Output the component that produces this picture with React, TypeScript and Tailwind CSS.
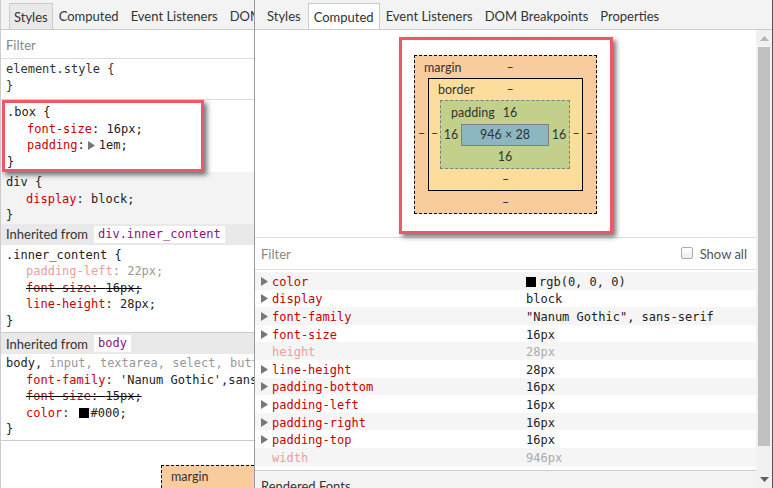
import React from "react";

const UI = "font-['Lato',sans-serif]";
const MONO = "font-['DejaVu_Sans_Mono',monospace]";

function Tri() {
  return (
    <svg width="7" height="9" viewBox="0 0 7 9" className="inline-block shrink-0">
      <path d="M0 0 L7 4.5 L0 9 Z" fill="#777" />
    </svg>
  );
}

function TopRow({ label, value, h, pl }: { label: string; value: string; h: string; pl: string }) {
  return (
    <div className={`${h} flex items-center`}>
      <span className={`flex-1 basis-0 min-w-0 whitespace-nowrap ${pl}`}>{label}</span>
      <span className="shrink-0">{value}</span>
      <span className="flex-1 basis-0 min-w-0" />
    </div>
  );
}

function BoxModel() {
  return (
    <div className={`w-[183px] h-[159px] border border-dashed border-black bg-[#f9cc9d] flex flex-col text-[12.5px] leading-none text-[#333] ${UI}`}>
      <TopRow label="margin" value="–" h="h-[22px] pt-[2px]" pl="pl-[9px]" />
      <div className="flex items-center h-[113px]">
        <div className="w-[13px] shrink-0 text-center">–</div>
        <div className="w-[155px] shrink-0 h-[113px] border border-black bg-[#fddd9b] flex flex-col">
          <TopRow label="border" value="–" h="h-[21px] pt-[2px]" pl="pl-[9px]" />
          <div className="flex items-center h-[69px]">
            <div className="w-[11px] shrink-0 text-center">–</div>
            <div className="w-[130px] shrink-0 h-[69px] border border-dashed border-[#808080] bg-[#c3d08b] flex flex-col">
              <TopRow label="padding" value="16" h="h-[23px] pt-[1px]" pl="pl-[10px]" />
              <div className="flex items-center h-[22px]">
                <div className="w-[20px] shrink-0 text-center">16</div>
                <div className="w-[88px] shrink-0 h-[22px] border border-[#808080] bg-[#8cb6c0] flex items-center justify-center">
                  946 × 28
                </div>
                <div className="w-[20px] shrink-0 text-center">16</div>
              </div>
              <div className="flex-1 flex items-center justify-center">16</div>
            </div>
            <div className="w-[12px] shrink-0 text-center">–</div>
          </div>
          <div className="flex-1 pt-[1px] flex items-center justify-center">–</div>
        </div>
        <div className="w-[13px] shrink-0 text-center">–</div>
      </div>
      <div className="flex-1 pt-[2px] flex items-center justify-center">–</div>
    </div>
  );
}

const N = "text-[#c80000]";

function Prop({ name, children }: { name: string; children: React.ReactNode }) {
  return (
    <div className="pl-[20px] whitespace-nowrap">
      <span className={N}>{name}</span>: {children}
    </div>
  );
}

function Struck({ name, value }: { name: string; value: string }) {
  return (
    <div className="pl-[20px] whitespace-nowrap">
      <span className="line-through decoration-black text-[#222]">
        <span className={N}>{name}</span>: {value}
      </span>
    </div>
  );
}

function Inherited({ label }: { label: string }) {
  return (
    <div className={`h-[21px] bg-[#e9e9e9] flex items-center px-[5px] gap-[6px] text-[13px] text-[#333] ${UI}`}>
      <span className="pt-[1px]">Inherited from</span>
      <span className={`h-[17px] bg-white px-[4px] flex items-center text-[12px] text-[#881280] ${MONO}`}>{label}</span>
    </div>
  );
}

const rows: { n: string; v: string; swatch?: boolean; dim?: boolean }[] = [
  { n: "color", v: "rgb(0, 0, 0)", swatch: true },
  { n: "display", v: "block" },
  { n: "font-family", v: '"Nanum Gothic", sans-serif' },
  { n: "font-size", v: "16px" },
  { n: "height", v: "28px", dim: true },
  { n: "line-height", v: "28px" },
  { n: "padding-bottom", v: "16px" },
  { n: "padding-left", v: "16px" },
  { n: "padding-right", v: "16px" },
  { n: "padding-top", v: "16px" },
  { n: "width", v: "946px", dim: true },
];

export default function App() {
  return (
    <div className="w-[773px] h-[488px] flex overflow-hidden bg-white">
      {/* Left: Styles panel */}
      <div className="w-[254px] shrink-0 h-full overflow-hidden border-l border-[#ccc] flex flex-col">
        <div className={`h-[30px] shrink-0 bg-[#f3f3f3] border-b border-[#ccc] flex items-end pl-[8px] text-[13px] text-[#333] whitespace-nowrap ${UI}`}>
          <div className="h-[26px] px-[4px] pt-[2px] flex items-center bg-[#e9e9e9] border border-b-0 border-[#ccc]">Styles</div>
          <div className="h-[26px] px-[6px] pt-[2px] flex items-center">Computed</div>
          <div className="h-[26px] px-[6px] pt-[2px] flex items-center">Event Listeners</div>
          <div className="h-[26px] px-[6px] pt-[2px] flex items-center">DOM Breakpoints</div>
        </div>
        <div className={`h-[29px] shrink-0 border-b border-[#ddd] flex items-center px-[5px] pt-[3px] text-[13px] text-[#888] ${UI}`}>
          Filter
        </div>
        <div className={`text-[12px] leading-[16.5px] text-[#222] ${MONO}`}>
          <div className="pt-[2px] pb-[5px] px-[5px] border-b border-[#ddd] text-[#333]">
            <div>element.style {"{"}</div>
            <div>{"}"}</div>
          </div>
          <div className="relative z-10 ml-[1px] w-[202px] border-[3px] border-[#f0566a] bg-white pl-[2px] pt-[1px] shadow-[3px_3px_5px_rgba(0,0,0,0.55)]">
            <div>.box {"{"}</div>
            <Prop name="font-size">16px;</Prop>
            <div className="pl-[20px] whitespace-nowrap flex items-center">
              <span className={N}>padding</span>:
              <span className="ml-[3px] mr-[4px] flex items-center">
                <Tri />
              </span>
              1em;
            </div>
            <div className="-mb-[1px]">{"}"}</div>
          </div>
          <div className="bg-[#f3f3f3] px-[5px] pt-[2px] pb-[0px]">
            <div>div {"{"}</div>
            <Prop name="display">block;</Prop>
            <div>{"}"}</div>
          </div>
          <Inherited label="div.inner_content" />
          <div className="px-[5px] pt-[2px] pb-[3px] border-b border-[#ccc]">
            <div>.inner_content {"{"}</div>
            <div className="pl-[20px] whitespace-nowrap text-[#999]">
              <span className="text-[#e8a0a0]">padding-left</span>: 22px;
            </div>
            <Struck name="font-size" value="16px;" />
            <Prop name="line-height">28px;</Prop>
            <div>{"}"}</div>
          </div>
          <Inherited label="body" />
          <div className="px-[5px] pt-[1px] pb-[2px] border-b border-[#ccc] overflow-hidden">
            <div className="whitespace-nowrap">
              body,<span className="text-[#999]"> input, textarea, select, button</span> {"{"}
            </div>
            <Prop name="font-family">'Nanum Gothic',sans-serif;</Prop>
            <Struck name="font-size" value="15px;" />
            <div className="pl-[20px] whitespace-nowrap flex items-center">
              <span className={N}>color</span>:&nbsp;
              <span className="inline-block w-[10px] h-[10px] bg-black ml-[2px] mr-[2px]" />
              #000;
            </div>
            <div>{"}"}</div>
          </div>
        </div>
        <div className="pt-[24px] pl-[160px]">
          <BoxModel />
        </div>
      </div>

      {/* Right: Computed panel */}
      <div className="w-[519px] shrink-0 h-full border-l border-[#9a9a9a] border-r border-r-[#555] flex flex-col">
        <div className={`h-[30px] shrink-0 bg-[#f3f3f3] border-b border-[#ccc] flex items-end pl-[5px] text-[13px] text-[#333] whitespace-nowrap ${UI}`}>
          <div className="h-[26px] px-[6px] pt-[2px] flex items-center border border-transparent">Styles</div>
          <div className="h-[26px] px-[5px] pt-[2px] flex items-center bg-white border border-b-0 border-[#ccc]">Computed</div>
          <div className="h-[26px] px-[6px] pt-[2px] flex items-center">Event Listeners</div>
          <div className="h-[26px] px-[6px] pt-[2px] flex items-center">DOM Breakpoints</div>
          <div className="h-[26px] px-[6px] pt-[2px] flex items-center">Properties</div>
        </div>
        <div className="flex-1 flex min-h-0">
          <div className="flex-1 flex flex-col min-w-0">
            <div className="h-[208px] shrink-0 border-b border-[#ddd] flex justify-center pt-[7px]">
              <div className="w-[214px] h-[197px] border-[3px] border-[#f0566a] bg-white flex justify-center pt-[15px] shadow-[3px_3px_5px_rgba(0,0,0,0.55)]">
                <BoxModel />
              </div>
            </div>
            <div className={`h-[32px] shrink-0 border-b border-[#ddd] flex items-center justify-between pl-[6px] pr-[9px] pt-[2px] text-[13px] ${UI}`}>
              <span className="text-[#888]">Filter</span>
              <span className="flex items-center gap-[7px] text-[#555]">
                <span className="w-[12px] h-[12px] -mt-[4px] rounded-[2px] border border-[#aaa] bg-gradient-to-b from-white to-[#ececec]" />
                Show all
              </span>
            </div>
            <div className={`pt-[2px] text-[12px] ${MONO}`}>
              {rows.map((r, i) => (
                <div
                  key={r.n}
                  className={`h-[17.6px] flex items-center pl-[6px] pt-[2px] ${i % 2 === 0 ? "bg-[#f5f5f5]" : "bg-white"}`}
                >
                  <span className="w-[11px] flex items-center -mt-[1px]">{r.dim ? null : <Tri />}</span>
                  <span className={`w-[254px] ${r.dim ? "text-[#e8a0a0]" : "text-[#c80000]"}`}>{r.n}</span>
                  <span className={`flex items-center whitespace-nowrap ${r.dim ? "text-[#aaa]" : "text-[#222]"}`}>
                    {r.swatch ? <span className="inline-block w-[10px] h-[10px] bg-black mr-[3px]" /> : null}
                    {r.v}
                  </span>
                </div>
              ))}
            </div>
            <div className={`mt-[4px] flex-1 border-t border-[#ccc] bg-[#f3f3f3] pl-[6px] pt-[6px] text-[13px] text-[#333] ${UI}`}>
              Rendered Fonts
            </div>
          </div>
          <div className="w-[16px] shrink-0 bg-[#f1f1f1] flex flex-col">
            <div className="h-[17px] flex items-center justify-center">
              <svg width="9" height="5" viewBox="0 0 9 5">
                <path d="M0 5 L4.5 0 L9 5 Z" fill="#b5b5b5" />
              </svg>
            </div>
            <div className="h-[399px] mx-[2px] bg-[#c1c1c1]" />
            <div className="flex-1" />
            <div className="h-[18px] flex items-center justify-center">
              <svg width="9" height="5" viewBox="0 0 9 5">
                <path d="M0 0 L4.5 5 L9 0 Z" fill="#606060" />
              </svg>
            </div>
          </div>
        </div>
      </div>
    </div>
  );
}
